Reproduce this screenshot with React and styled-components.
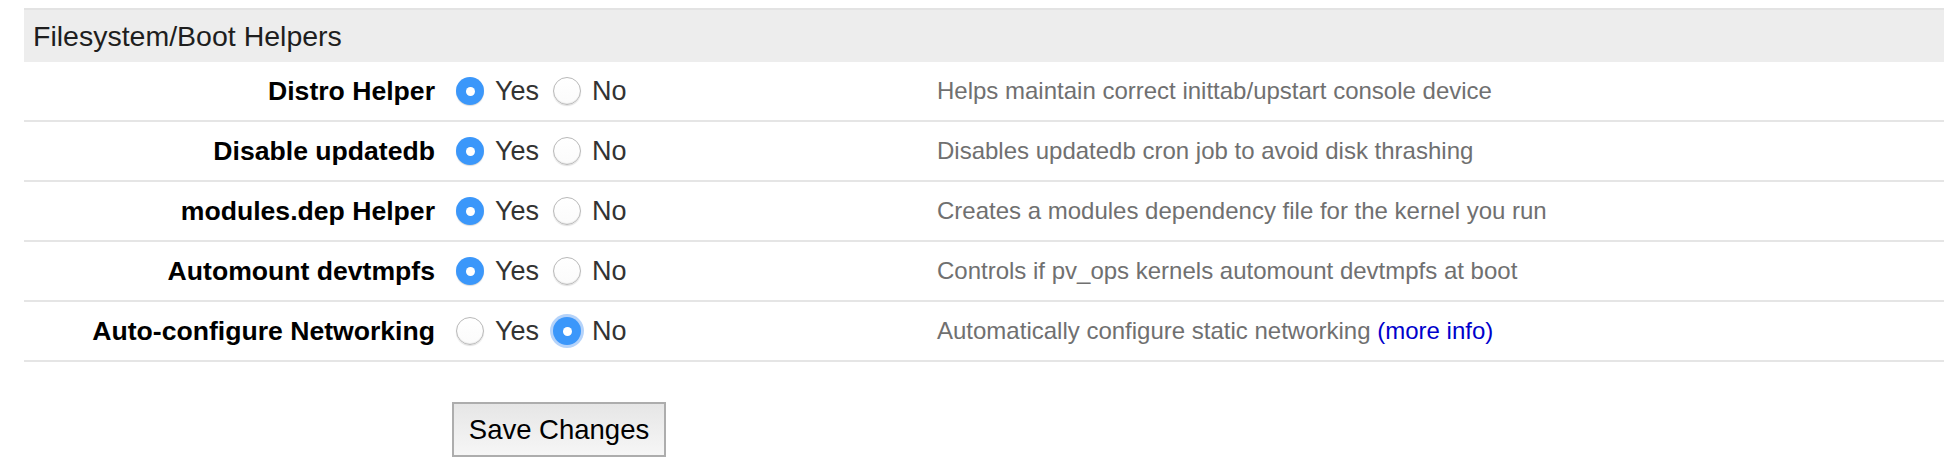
import React from "react";
import styled, { createGlobalStyle } from "styled-components";

const GlobalStyle = createGlobalStyle`
    body {
        margin: 0;
        background: #ffffff;
        font-family: "Liberation Sans", Arial, sans-serif;
    }
`;

const settings = [
    { label: "Distro Helper", value: true, desc: "Helps maintain correct inittab/upstart console device" },
    { label: "Disable updatedb", value: true, desc: "Disables updatedb cron job to avoid disk thrashing" },
    { label: "modules.dep Helper", value: true, desc: "Creates a modules dependency file for the kernel you run" },
    { label: "Automount devtmpfs", value: true, desc: "Controls if pv_ops kernels automount devtmpfs at boot" },
    { label: "Auto-configure Networking", value: false, desc: "Automatically configure static networking", more: true, focused: true },
];

const Radio = ({ checked, focused }) => (
    <RadioCircle $checked={checked} $focused={focused}>
        {checked && <RadioDot />}
    </RadioCircle>
);

const App = () => {
    return (
        <Page>
            <GlobalStyle />
            <Section>
                <SectionHeader>Filesystem/Boot Helpers</SectionHeader>
                {settings.map((s) => (
                    <Row key={s.label}>
                        <Label>{s.label}</Label>
                        <Options>
                            <Option>
                                <Radio checked={s.value} />
                                <OptionText>Yes</OptionText>
                            </Option>
                            <Option>
                                <Radio checked={!s.value} focused={s.focused} />
                                <OptionText>No</OptionText>
                            </Option>
                        </Options>
                        <Description>
                            {s.desc}
                            {s.more && <> <MoreLink href="#">(more info)</MoreLink></>}
                        </Description>
                    </Row>
                ))}
            </Section>
            <ButtonRow>
                <SaveButton>Save Changes</SaveButton>
            </ButtonRow>
        </Page>
    );
};

export default App;

const Page = styled.div`
    padding: 8px 0 0 24px;
    height: 464px;
    box-sizing: border-box;
`;

const Section = styled.div`
    width: 1920px;
    display: flex;
    flex-direction: column;
`;

const SectionHeader = styled.div`
    height: 52px;
    border-top: 2px solid #e3e3e3;
    background: #ededed;
    padding-left: 9px;
    display: flex;
    align-items: center;
    font-size: 28.5px;
    color: #1e1e1e;
`;

const Row = styled.div`
    height: 58px;
    border-bottom: 2px solid #e5e5e5;
    display: grid;
    grid-template-columns: 432px 481px 1fr;
    align-items: center;
`;

const Label = styled.div`
    box-sizing: border-box;
    padding-right: 21px;
    text-align: right;
    font-size: 26.6px;
    font-weight: bold;
    color: #000;
`;

const Options = styled.div`
    display: flex;
    align-items: center;
    gap: 14px;
`;

const Option = styled.label`
    display: flex;
    align-items: center;
    gap: 11px;
`;

const RadioCircle = styled.span`
    width: 28px;
    height: 28px;
    border-radius: 50%;
    box-sizing: border-box;
    display: flex;
    align-items: center;
    justify-content: center;
    background: ${(p) => (p.$checked ? "#3b97fa" : "linear-gradient(#ffffff, #fbfbfb)")};
    border: ${(p) => (p.$checked ? "none" : "1.5px solid #b9b9b9")};
    box-shadow: ${(p) =>
        p.$focused
            ? "0 0 0 3px rgba(120, 175, 245, 0.55)"
            : p.$checked
            ? "0 1px 1px rgba(0, 0, 0, 0.15)"
            : "inset 0 -1px 1px rgba(0, 0, 0, 0.08), 0 1px 1px rgba(0, 0, 0, 0.12)"};
`;

const RadioDot = styled.span`
    width: 9px;
    height: 9px;
    border-radius: 50%;
    background: #ffffff;
`;

const OptionText = styled.span`
    font-size: 27px;
    color: #333;
`;

const Description = styled.div`
    font-size: 24px;
    color: #707070;
`;

const MoreLink = styled.a`
    color: #0000cc;
    text-decoration: none;
`;

const ButtonRow = styled.div`
    margin-top: 40px;
    padding-left: 428px;
`;

const SaveButton = styled.button`
    width: 214px;
    height: 55px;
    border: 2px solid #adadad;
    background: linear-gradient(#e6e6e6, #f6f6f6);
    font-family: "Liberation Sans", Arial, sans-serif;
    font-size: 27.5px;
    color: #000;
    padding: 0;
`;
